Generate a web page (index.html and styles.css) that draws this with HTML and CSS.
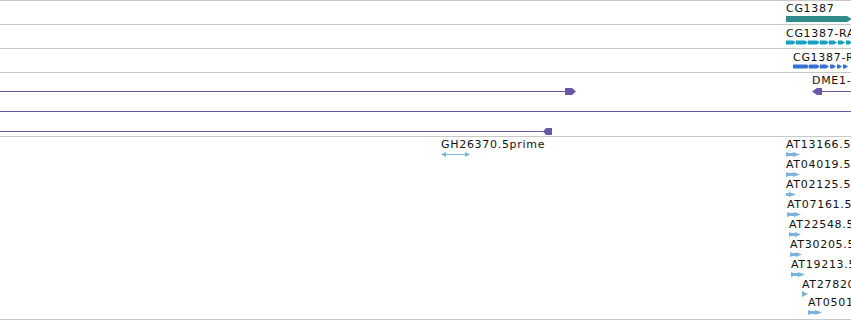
FILE: index.html
```html
<!DOCTYPE html>
<html lang="en">
<head>
    <meta charset="UTF-8">
    <title>Track view</title>
    <link rel="stylesheet" href="styles.css">
</head>
<body>
    <div class="view">

        <!-- Gene model -->
        <div class="track track-row">
            <div class="feature" style="left: 786px; top: 2px;">
                <span class="label">CG1387</span>
                <svg class="glyph" width="70" height="8">
                    <polygon points="0,1 61,1 66,4 61,7 0,7" fill="#2f8b8c"/>
                </svg>
            </div>
        </div>

        <!-- Transcripts -->
        <div class="track track-row">
            <div class="feature" style="left: 786px; top: 3px;">
                <span class="label">CG1387-RA</span>
                <svg class="glyph" width="70" height="8">
                    <g fill="#16a0c8">
                        <polygon points="0,0.5 7,0.5 10,2.5 7,4.5 0,4.5"/>
                        <polygon points="10,0.5 19,0.5 22,2.5 19,4.5 10,4.5"/>
                        <polygon points="22,0.5 31,0.5 34,2.5 31,4.5 22,4.5"/>
                        <polygon points="34,0.5 40,0.5 43,2.5 40,4.5 34,4.5"/>
                        <polygon points="43,0.5 48,0.5 51,2.5 48,4.5 43,4.5"/>
                        <polygon points="52,0.5 56,0.5 59,2.5 56,4.5 52,4.5"/>
                        <polygon points="60,0.5 63,0.5 66,2.5 63,4.5 60,4.5"/>
                    </g>
                </svg>
            </div>
        </div>

        <div class="track track-row">
            <div class="feature" style="left: 793px; top: 3px;">
                <span class="label">CG1387-RB</span>
                <svg class="glyph" width="60" height="8">
                    <g fill="#3570d2">
                        <polygon points="0,0.5 14,0.5 16,2.5 14,4.5 0,4.5"/>
                        <polygon points="16,0.5 24,0.5 27,2.5 24,4.5 16,4.5"/>
                        <polygon points="27,0.5 33,0.5 36,2.5 33,4.5 27,4.5"/>
                        <polygon points="37,0.5 40,0.5 43,2.5 40,4.5 37,4.5"/>
                        <polygon points="44,0.5 46,0.5 49,2.5 46,4.5 44,4.5"/>
                        <polygon points="50,0.5 52,0.5 55,2.5 52,4.5 50,4.5"/>
                    </g>
                </svg>
            </div>
        </div>

        <!-- Alignments -->
        <div class="track track-align">
            <svg class="lane" width="851" height="64">
                <line x1="0" y1="19.5" x2="567" y2="19.5" stroke="#6a58a6"/>
                <polygon points="565,16 572,16 576,19.5 572,23 565,23" fill="#6a58a6"/>
                <line x1="0" y1="39.5" x2="851" y2="39.5" stroke="#6a58a6"/>
                <line x1="0" y1="59.5" x2="546" y2="59.5" stroke="#6a58a6"/>
                <polygon points="543,59.5 546,56 552,56 552,63 546,63" fill="#6a58a6"/>
                <polygon points="812,19.5 817,16 822,16 822,23 817,23" fill="#6a58a6"/>
                <line x1="820" y1="19.5" x2="851" y2="19.5" stroke="#6a58a6"/>
            </svg>
            <div class="feature" style="left: 812px; top: 2px;">
                <span class="label">DME1-</span>
            </div>
        </div>

        <!-- ESTs -->
        <div class="track track-est">
            <div class="feature" style="left: 441px; top: 2px;">
                <span class="label">GH26370.5prime</span>
                <svg class="glyph" width="30" height="8">
                    <line x1="2" y1="3.5" x2="28" y2="3.5" stroke="#7db3dc"/>
                    <polygon points="0,3.5 5,1 5,6" fill="#7db3dc"/>
                    <polygon points="29,3.5 24,1 24,6" fill="#7db3dc"/>
                </svg>
            </div>

            <div class="feature" style="left: 786px; top: 2px;">
                <span class="label">AT13166.5</span>
                <svg class="glyph" width="16" height="8"><use href="#est2"/></svg>
            </div>
            <div class="feature" style="left: 786px; top: 22px;">
                <span class="label">AT04019.5</span>
                <svg class="glyph" width="16" height="8"><use href="#est2"/></svg>
            </div>
            <div class="feature" style="left: 786px; top: 42px;">
                <span class="label">AT02125.5</span>
                <svg class="glyph" width="16" height="8"><use href="#est1"/></svg>
            </div>
            <div class="feature" style="left: 787px; top: 62px;">
                <span class="label">AT07161.5</span>
                <svg class="glyph" width="16" height="8"><use href="#est2"/></svg>
            </div>
            <div class="feature" style="left: 789px; top: 82px;">
                <span class="label">AT22548.5</span>
                <svg class="glyph" width="16" height="8"><use href="#est2s"/></svg>
            </div>
            <div class="feature" style="left: 790px; top: 102px;">
                <span class="label">AT30205.5</span>
                <svg class="glyph" width="16" height="8"><use href="#est2s"/></svg>
            </div>
            <div class="feature" style="left: 791px; top: 122px;">
                <span class="label">AT19213.5</span>
                <svg class="glyph" width="16" height="8"><use href="#est2"/></svg>
            </div>
            <div class="feature" style="left: 802px; top: 142px;">
                <span class="label">AT27820.5</span>
                <svg class="glyph" width="16" height="8"><use href="#est0"/></svg>
            </div>
            <div class="feature" style="left: 808px; top: 160px;">
                <span class="label">AT05012.5</span>
                <svg class="glyph" width="16" height="8"><use href="#est2"/></svg>
            </div>
        </div>
    </div>

    <!-- shared EST arrow glyphs -->
    <svg class="defs" width="0" height="0">
        <defs>
            <g id="est2">
                <rect x="0" y="2" width="8" height="3" fill="#7db3dc"/>
                <polygon points="0,1 7,3.5 0,6" fill="#7db3dc"/>
                <polygon points="7,1 14,3.5 7,6" fill="#7db3dc"/>
            </g>
            <g id="est2s">
                <rect x="0" y="2" width="6" height="3" fill="#7db3dc"/>
                <polygon points="0,1 6,3.5 0,6" fill="#7db3dc"/>
                <polygon points="6,1 12,3.5 6,6" fill="#7db3dc"/>
            </g>
            <g id="est1">
                <rect x="0" y="2" width="5" height="3" fill="#7db3dc"/>
                <polygon points="3,1 10,3.5 3,6" fill="#7db3dc"/>
            </g>
            <g id="est0">
                <polygon points="0,0 6,3 0,6" fill="#7db3dc"/>
            </g>
        </defs>
    </svg>
</body>
</html>
```

FILE: styles.css
```css
* {
    margin: 0;
    padding: 0;
    box-sizing: border-box;
}

body {
    font-family: "DejaVu Sans", sans-serif;
    font-size: 11px;
    color: #111;
    background-color: #fff;
}

.view {
    width: 851px;
    height: 320px;
    overflow: hidden;
}

.track {
    position: relative;
    border-top: 1px solid #c8c8c8;
    overflow: hidden;
}

.track-row {
    height: 24px;
}

.track-align {
    height: 64px;
}

.track-est {
    height: 184px;
    border-bottom: 1px solid #c8c8c8;
}

/* features sit at their genome coordinate */
.feature {
    position: absolute;
    white-space: nowrap;
}

.label {
    display: block;
    height: 12px;
    line-height: 12px;
    letter-spacing: 0.7px;
}

.glyph {
    display: block;
    overflow: visible;
}

.lane {
    position: absolute;
    left: 0;
    top: -1px;
}

.defs {
    position: absolute;
}
```
